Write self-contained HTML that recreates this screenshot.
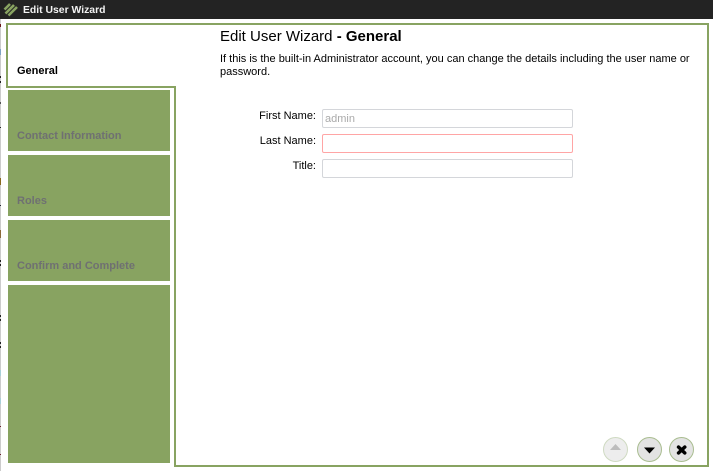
<!DOCTYPE html>
<html><head><meta charset="utf-8">
<style>
html,body{margin:0;padding:0;width:713px;height:471px;overflow:hidden;background:#fff;font-family:"Liberation Sans",sans-serif;color:#000}
.a{position:absolute}
.g{background:#88a361}
.n{position:absolute;left:17px;font-size:11px;font-weight:bold;color:#6f7072;line-height:13px;white-space:nowrap}
.l{position:absolute;width:100px;left:216px;text-align:right;font-size:11px;line-height:14px;color:#000;white-space:nowrap}
.i{position:absolute;left:322px;width:251px;height:19px;box-sizing:border-box;border:1px solid #d4d6da;border-radius:2px;background:#fff;font-size:11px;color:#aaa;padding-left:2px;padding-top:1px;line-height:17px}
.b{position:absolute;top:437px;width:25px;height:25px;box-sizing:border-box;border-radius:50%;border:1px solid #a9bd90;background:#e3e3e3}
.s{position:absolute;left:0;width:1px;background:#222}
</style></head>
<body>
<div class="a" style="left:0;top:0;width:713px;height:19px;background:#232323"></div>
<svg class="a" style="left:3px;top:2px" width="15" height="15" viewBox="0 0 15 15"><path d="M1.5 7.5L7 2M2.5 11.5L11 3M5.5 13.5L14 5" stroke="#88a361" stroke-width="2.6" fill="none"/></svg>
<div class="a" style="left:23px;top:4px;font-size:10.4px;font-weight:bold;color:#f2f2f2;line-height:14px;white-space:nowrap">Edit User Wizard</div>

<div class="a" style="left:0;top:19px;width:1px;height:452px;background:#ccc"></div>
<div class="s" style="top:24px;height:3px;background:#6b1a1a"></div>
<div class="s" style="top:49px;height:6px;background:#7fa3c4"></div>
<div class="s" style="top:76px;height:2px"></div>
<div class="s" style="top:81px;height:2px"></div>
<div class="s" style="top:102px;height:2px;background:#555"></div>
<div class="s" style="top:127px;height:1px"></div>
<div class="s" style="top:178px;height:7px;background:#8a6a20"></div>
<div class="s" style="top:205px;height:1px;background:#223"></div>
<div class="s" style="top:230px;height:8px;background:#8c6a3a"></div>
<div class="s" style="top:260px;height:2px"></div>
<div class="s" style="top:264px;height:2px"></div>
<div class="s" style="top:315px;height:2px"></div>
<div class="s" style="top:319px;height:2px"></div>
<div class="s" style="top:342px;height:2px"></div>
<div class="s" style="top:346px;height:2px"></div>
<div class="s" style="top:370px;height:6px;background:#a8d0d8"></div>
<div class="s" style="top:398px;height:6px;background:#a8d0d8"></div>
<div class="s" style="top:426px;height:1px;background:#6b1a2a"></div>
<div class="s" style="top:454px;height:1px;background:#6b1a2a"></div>

<!-- Outline -->
<div class="a g" style="left:6px;top:23px;width:703px;height:2px"></div>
<div class="a g" style="left:707px;top:23px;width:2px;height:444px"></div>
<div class="a g" style="left:174px;top:465px;width:535px;height:2px"></div>
<div class="a g" style="left:174px;top:86px;width:2px;height:381px"></div>
<div class="a g" style="left:6px;top:86px;width:170px;height:2px"></div>
<div class="a g" style="left:6px;top:23px;width:2px;height:65px"></div>

<div class="a" style="left:17px;top:65px;font-size:11px;font-weight:bold;line-height:13px;white-space:nowrap">General</div>

<div class="a g" style="left:8px;top:90px;width:162px;height:61px"></div>
<div class="a g" style="left:8px;top:155px;width:162px;height:61px"></div>
<div class="a g" style="left:8px;top:220px;width:162px;height:61px"></div>
<div class="a g" style="left:8px;top:285px;width:162px;height:178px"></div>
<div class="n" style="top:130px">Contact Information</div>
<div class="n" style="top:195px">Roles</div>
<div class="n" style="top:260px">Confirm and Complete</div>

<div class="a" style="left:220px;top:28px;font-size:15px;line-height:18px;white-space:nowrap">Edit User Wizard <b>- General</b></div>
<div class="a" style="left:220px;top:52px;width:480px;font-size:11px;line-height:13px;padding-top:1px">If this is the built-in Administrator account, you can change the details including the user name or password.</div>

<div class="l" style="top:109px">First Name:</div>
<div class="l" style="top:134px">Last Name:</div>
<div class="l" style="top:159px">Title:</div>
<div class="i" style="top:109px">admin</div>
<div class="i" style="top:134px;border-color:#ffa5a5"></div>
<div class="i" style="top:159px"></div>

<div class="b" style="left:603px;background:#ededed;border-color:#cfdac2"><svg width="23" height="23" style="display:block"><path d="M6 12L11.5 6L17 12Z" fill="#bdbdbd"/></svg></div>
<div class="b" style="left:637px"><svg width="23" height="23" style="display:block"><path d="M6 9.5H17L11.5 15.5Z" fill="#000"/></svg></div>
<div class="b" style="left:669px"><svg width="23" height="23" style="display:block"><path d="M8.5 9L14.8 15M14.8 9L8.5 15" stroke="#000" stroke-width="3.4" stroke-linecap="round"/></svg></div>
</body></html>
